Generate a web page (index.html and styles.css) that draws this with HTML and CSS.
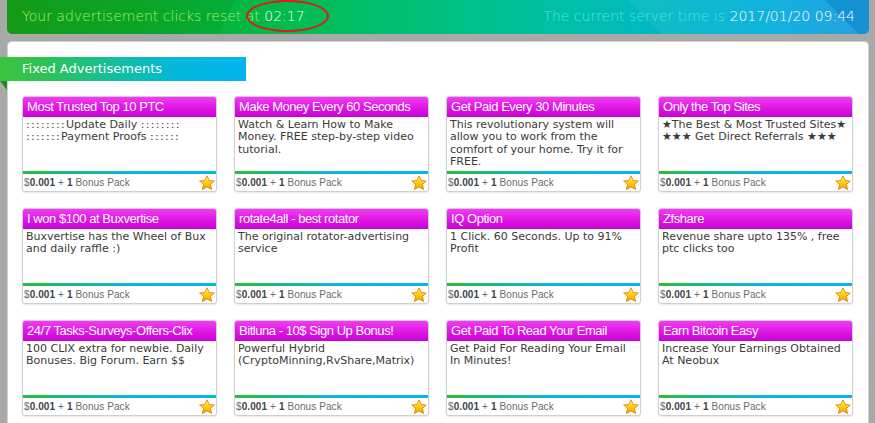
FILE: index.html
```html
<!DOCTYPE html>
<html lang="en">
<head>
<meta charset="utf-8">
<title>Fixed Advertisements</title>
<link rel="stylesheet" href="styles.css">
</head>
<body>
<svg class="defs" width="0" height="0" aria-hidden="true">
  <defs>
    <linearGradient id="starfill" x1="0" y1="0" x2="0" y2="1">
      <stop offset="0" stop-color="#fff48a"/>
      <stop offset="0.45" stop-color="#ffd21a"/>
      <stop offset="1" stop-color="#f59a00"/>
    </linearGradient>
    <symbol id="star" viewBox="0 0 16 16">
      <polygon points="8,0.8 10.2,5.5 15.3,6 11.4,9.4 12.6,14.6 8,11.9 3.4,14.6 4.6,9.4 0.7,6 5.8,5.5" fill="url(#starfill)" stroke="#e08a00" stroke-width="0.9" stroke-linejoin="round"/>
    </symbol>
  </defs>
</svg>

<header class="topbar">
  <div class="reset">Your advertisement clicks reset <span class="mark">at <b>02:17</b><i class="ring"></i></span></div>
  <div class="clock">The current server time is <b>2017/01/20 09:44</b></div>
</header>

<main class="panel">
  <h2 class="ribbon">Fixed Advertisements</h2>
  <div class="grid">
    <div class="ad">
      <div class="ad-title">Most Trusted Top 10 PTC</div>
      <div class="ad-desc"><span class="dots">::::::::</span>Update Daily <span class="dots">::::::::</span> <span class="dots">:::::::</span>Payment Proofs <span class="dots">::::::</span></div>
      <div class="ad-bar"></div>
      <div class="ad-foot"><span class="price">$<b>0.001</b> + <b>1</b> Bonus Pack</span><svg class="star"><use href="#star"/></svg></div>
    </div>
    <div class="ad">
      <div class="ad-title">Make Money Every 60 Seconds</div>
      <div class="ad-desc">Watch &amp; Learn How to Make Money. FREE step-by-step video tutorial.</div>
      <div class="ad-bar"></div>
      <div class="ad-foot"><span class="price">$<b>0.001</b> + <b>1</b> Bonus Pack</span><svg class="star"><use href="#star"/></svg></div>
    </div>
    <div class="ad">
      <div class="ad-title">Get Paid Every 30 Minutes</div>
      <div class="ad-desc">This revolutionary system will allow you to work from the comfort of your home. Try it for FREE.</div>
      <div class="ad-bar"></div>
      <div class="ad-foot"><span class="price">$<b>0.001</b> + <b>1</b> Bonus Pack</span><svg class="star"><use href="#star"/></svg></div>
    </div>
    <div class="ad">
      <div class="ad-title">Only the Top Sites</div>
      <div class="ad-desc">★The Best &amp; Most Trusted Sites★ ★★★ Get Direct Referrals ★★★</div>
      <div class="ad-bar"></div>
      <div class="ad-foot"><span class="price">$<b>0.001</b> + <b>1</b> Bonus Pack</span><svg class="star"><use href="#star"/></svg></div>
    </div>

    <div class="ad">
      <div class="ad-title">I won $100 at Buxvertise</div>
      <div class="ad-desc">Buxvertise has the Wheel of Bux and daily raffle :)</div>
      <div class="ad-bar"></div>
      <div class="ad-foot"><span class="price">$<b>0.001</b> + <b>1</b> Bonus Pack</span><svg class="star"><use href="#star"/></svg></div>
    </div>
    <div class="ad">
      <div class="ad-title">rotate4all - best rotator</div>
      <div class="ad-desc">The original rotator-advertising service</div>
      <div class="ad-bar"></div>
      <div class="ad-foot"><span class="price">$<b>0.001</b> + <b>1</b> Bonus Pack</span><svg class="star"><use href="#star"/></svg></div>
    </div>
    <div class="ad">
      <div class="ad-title">IQ Option</div>
      <div class="ad-desc">1 Click. 60 Seconds. Up to 91% Profit</div>
      <div class="ad-bar"></div>
      <div class="ad-foot"><span class="price">$<b>0.001</b> + <b>1</b> Bonus Pack</span><svg class="star"><use href="#star"/></svg></div>
    </div>
    <div class="ad">
      <div class="ad-title">Zfshare</div>
      <div class="ad-desc">Revenue share upto 135% , free ptc clicks too</div>
      <div class="ad-bar"></div>
      <div class="ad-foot"><span class="price">$<b>0.001</b> + <b>1</b> Bonus Pack</span><svg class="star"><use href="#star"/></svg></div>
    </div>

    <div class="ad">
      <div class="ad-title">24/7 Tasks-Surveys-Offers-Clix</div>
      <div class="ad-desc">100 CLIX extra for newbie. Daily Bonuses. Big Forum. Earn $$</div>
      <div class="ad-bar"></div>
      <div class="ad-foot"><span class="price">$<b>0.001</b> + <b>1</b> Bonus Pack</span><svg class="star"><use href="#star"/></svg></div>
    </div>
    <div class="ad">
      <div class="ad-title">Bitluna - 10$ Sign Up Bonus!</div>
      <div class="ad-desc">Powerful Hybrid (CryptoMinning,RvShare,Matrix)</div>
      <div class="ad-bar"></div>
      <div class="ad-foot"><span class="price">$<b>0.001</b> + <b>1</b> Bonus Pack</span><svg class="star"><use href="#star"/></svg></div>
    </div>
    <div class="ad">
      <div class="ad-title">Get Paid To Read Your Email</div>
      <div class="ad-desc">Get Paid For Reading Your Email In Minutes!</div>
      <div class="ad-bar"></div>
      <div class="ad-foot"><span class="price">$<b>0.001</b> + <b>1</b> Bonus Pack</span><svg class="star"><use href="#star"/></svg></div>
    </div>
    <div class="ad">
      <div class="ad-title">Earn Bitcoin Easy</div>
      <div class="ad-desc">Increase Your Earnings Obtained At Neobux</div>
      <div class="ad-bar"></div>
      <div class="ad-foot"><span class="price">$<b>0.001</b> + <b>1</b> Bonus Pack</span><svg class="star"><use href="#star"/></svg></div>
    </div>
  </div>
</main>
</body>
</html>
```

FILE: styles.css
```css
* { box-sizing: border-box; }

html, body {
  margin: 0;
  padding: 0;
}

body {
  background: #a9a9a9;
  width: 875px;
  height: 423px;
  overflow: hidden;
  font-family: "DejaVu Sans", Verdana, sans-serif;
}

.defs {
  position: absolute;
  width: 0;
  height: 0;
}

/* ---------- top bar ---------- */
.topbar {
  height: 34px;
  margin: 0 6px 0 7px;
  padding: 0 14px 2px 15px;
  display: flex;
  align-items: center;
  justify-content: space-between;
  border-radius: 0 0 5px 5px;
  font-size: 14px;
  font-weight: 200;
  white-space: nowrap;
  background:
    linear-gradient(45deg, rgba(0,0,0,0) 0 73%, rgba(255,255,255,0.06) 73% 95%, rgba(0,40,120,0.10) 95%),
    linear-gradient(118deg, rgba(0,50,0,0.07) 0 26%, rgba(0,0,0,0) 26%),
    linear-gradient(90deg, #16a21a 0%, #0aae2a 16%, #00bc52 34%, #00c07e 50%, #00bfa6 64%, #00b8c4 76%, #02aedc 88%, #1a9ade 100%);
}

.reset {
  color: #a8ef5c;
}

.reset b,
.clock b {
  font-weight: inherit;
  color: #ffffff;
}

.mark {
  position: relative;
}

.ring {
  position: absolute;
  left: 0;
  top: -8px;
  width: 83px;
  height: 32px;
  border: 2.6px solid #e8141a;
  border-radius: 50%;
}

.clock {
  color: #4fe6dc;
}

/* ---------- panel ---------- */
.panel {
  margin: 7px 6px 0 7px;
  height: 390px;
  background: #ffffff;
  border: 1px solid #d2d2d2;
  border-bottom: 0;
  border-radius: 5px 5px 0 0;
  padding: 15px 15px 0 14px;
}

.ribbon {
  position: relative;
  margin: 0 0 15px -22px;
  width: 246px;
  height: 24px;
  padding-left: 22px;
  font-size: 13px;
  font-weight: normal;
  line-height: 24px;
  color: #ffffff;
  background: linear-gradient(90deg, #3cc43c 0%, #2cc25a 20%, #12bea0 48%, #04b8d8 70%, #00b4f0 100%);
}

.ribbon::after {
  content: "";
  position: absolute;
  left: 0;
  top: 100%;
  width: 7px;
  height: 9px;
  background: #1c8a22;
  clip-path: polygon(0 0, 100% 0, 100% 100%);
}

/* ---------- ads grid ---------- */
.grid {
  display: grid;
  grid-template-columns: repeat(4, 195px);
  grid-auto-rows: 96px;
  column-gap: 17px;
  row-gap: 16px;
}

.ad {
  display: grid;
  grid-template-rows: 20px 1fr 3px 17px;
  border: 1px solid #cfcfcf;
  border-radius: 3px;
  background: #ffffff;
  box-shadow: 0 1px 2px rgba(0,0,0,0.10);
  overflow: hidden;
}

.ad-title {
  background: linear-gradient(#f23cf2 0%, #e019e6 50%, #c800d4 100%);
  color: #ffffff;
  font-family: "Liberation Sans", Arial, sans-serif;
  font-size: 13px;
  letter-spacing: -0.45px;
  line-height: 20px;
  padding-left: 4px;
  white-space: nowrap;
  overflow: hidden;
}

.ad-desc {
  padding: 2px 3px 0 3px;
  font-size: 11px;
  line-height: 12.4px;
  color: #3a3a3a;
  overflow: hidden;
}

.dots {
  letter-spacing: 1.3px;
}

.ad-bar {
  background: linear-gradient(90deg, #2bbd3c 0%, #18b99a 32%, #08b6e6 58%, #06b5ef 100%);
}

.ad-foot {
  display: flex;
  align-items: center;
  justify-content: space-between;
  padding: 0 1px 0 1px;
}

.price {
  font-family: "Liberation Sans", Arial, sans-serif;
  font-size: 10px;
  letter-spacing: 0.1px;
  color: #6a6a6a;
}

.price b {
  color: #444444;
}

.star {
  width: 16px;
  height: 16px;
  flex: none;
}
```
